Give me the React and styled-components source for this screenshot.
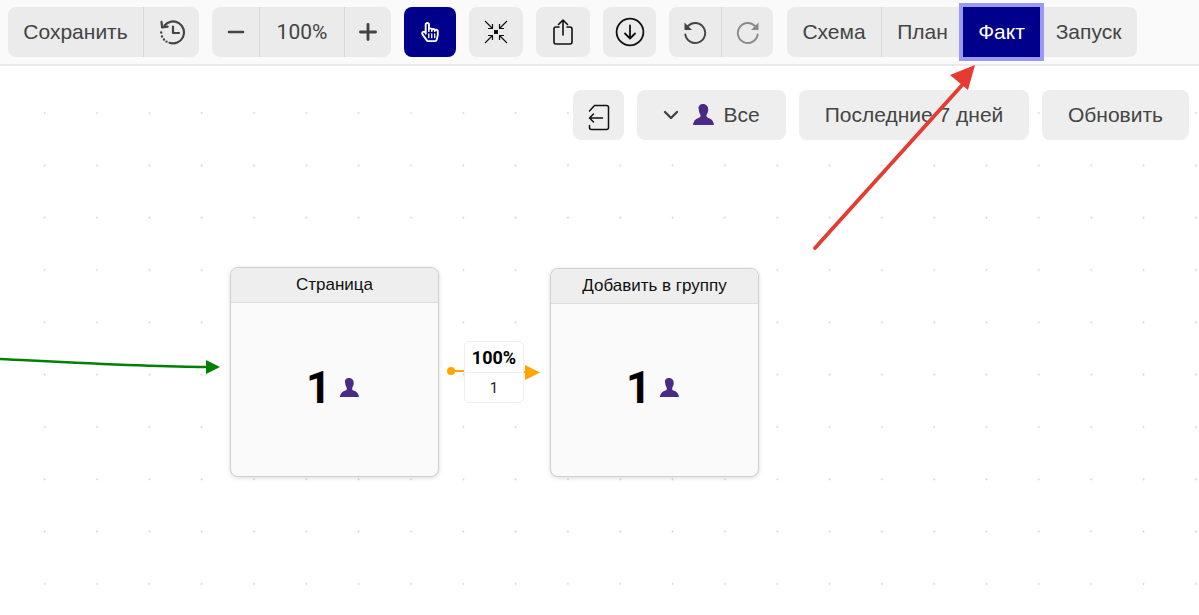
import React from 'react'
import styled, { createGlobalStyle } from 'styled-components'
import { Minus, Plus, ChevronDown } from 'lucide-react'
import { FaRegHandPointer } from 'react-icons/fa'

const GlobalStyle = createGlobalStyle`
  html, body {
    margin: 0;
    height: 100%;
    overflow: hidden;
    background: #fff;
    font-family: "Liberation Sans", Arial, sans-serif;
  }
  * { box-sizing: border-box; }
`

const Page = styled.div`
  width: 1199px;
  height: 615px;
  display: flex;
  flex-direction: column;
  position: relative;
  overflow: hidden;
`

const Toolbar = styled.div`
  height: 66px;
  flex: none;
  display: flex;
  gap: 13px;
  padding: 7px 8px 0;
  background: #fafafa;
  border-bottom: 2px solid #eaeaea;
`

const Group = styled.div`
  height: 50px;
  display: flex;
  border-radius: 8px;
  background: #ebebeb;
  margin-left: ${p => p.$ml || 0}px;
`

const Segment = styled.div`
  width: ${p => p.$w}px;
  height: 50px;
  display: flex;
  align-items: center;
  justify-content: center;
  padding-bottom: 1px;
  font-size: 21px;
  color: #444;
  position: relative;
  border-left: ${p => (p.$line ? '1px solid #d9d9d9' : 'none')};
  ${p => p.$active && `
    background: #00008b;
    color: #fff;
    outline: 4px solid #9a9aef;
    z-index: 1;
  `}
`

const Digits = styled.span`
  font-family: Roboto, "Liberation Sans", sans-serif;
`

const IconButton = styled.div`
  width: ${p => p.$w}px;
  height: 50px;
  display: flex;
  align-items: center;
  justify-content: center;
  border-radius: 8px;
  color: ${p => (p.$active ? '#fff' : '#111')};
  background: ${p => (p.$active ? '#00008b' : '#ebebeb')};
`

const Canvas = styled.div`
  flex: 1;
  position: relative;
  background-image: radial-gradient(circle, #cbcbcb 0.8px, transparent 1.1px);
  background-size: 52.33px 52.33px;
  background-position: 18.5px 20.8px;
`

const ActionRow = styled.div`
  display: flex;
  justify-content: flex-end;
  gap: 13px;
  padding: 24px 10px 0 0;
`

const ActionButton = styled.div`
  width: ${p => p.$w}px;
  height: 50px;
  display: flex;
  align-items: center;
  justify-content: center;
  gap: 9px;
  padding-right: ${p => p.$pr || 0}px;
  padding-top: ${p => p.$pt || 0}px;
  border-radius: 8px;
  background: #eee;
  font-size: 21px;
  color: #444;
`

const Node = styled.div`
  position: absolute;
  left: ${p => p.$x}px;
  top: ${p => p.$y}px;
  width: 209px;
  height: 209.5px;
  display: flex;
  flex-direction: column;
  background: #fafafa;
  border: 1px solid #d0d0d0;
  border-radius: 8px;
  box-shadow: 0 1px 4px rgba(0, 0, 0, 0.15);
  overflow: hidden;
`

const NodeTitle = styled.div`
  height: 35px;
  flex: none;
  display: flex;
  align-items: center;
  justify-content: center;
  background: #eee;
  border-bottom: 1px solid #ddd;
  font-size: 17px;
  color: #111;
`

const NodeBody = styled.div`
  flex: 1;
  display: flex;
  align-items: center;
  justify-content: center;
  gap: 8px;
  padding: 0 4px 3px 0;
  font-family: Roboto, "Liberation Sans", sans-serif;
  font-size: 44px;
  font-weight: 700;
  color: #000;
`

const EdgeLabel = styled.div`
  position: absolute;
  left: 464px;
  top: 275px;
  width: 60px;
  height: 62px;
  display: flex;
  flex-direction: column;
  background: #fff;
  border: 1px solid #eee;
  border-radius: 5px;
  font-family: Roboto, "Liberation Sans", sans-serif;
`

const EdgePercent = styled.div`
  height: 31px;
  display: flex;
  align-items: center;
  justify-content: center;
  border-bottom: 1px solid #eee;
  font-size: 18px;
  font-weight: 700;
  color: #000;
`

const EdgeCount = styled.div`
  flex: 1;
  display: flex;
  align-items: center;
  justify-content: center;
  font-size: 15px;
  color: #222;
`

const Overlay = styled.svg`
  position: absolute;
  left: 0;
  top: 0;
  pointer-events: none;
  z-index: ${p => p.$z || 0};
`

const TurnSvg = styled.svg`
  transform: ${p => (p.$flip ? 'scaleX(-1)' : 'none')};
`

const HistoryIcon = () => (
  <svg width="28" height="28" viewBox="0 0 28 28" fill="none" stroke="#444" strokeWidth="2.2" strokeLinecap="round" strokeLinejoin="round">
    <path d="M6.5 7.5A11 11 0 1 1 11.5 24.8" />
    <path d="M15 8.5V15h6" />
    <path d="M3.5 3.8l.6 5.6 5.6-.7" />
    <path d="M3.2 14.5v.01M4 18.5v.01M6 21.5v.01M8.5 23.6v.01" strokeWidth="2.4" />
  </svg>
)

const CompressIcon = () => (
  <svg width="24" height="24" viewBox="0 0 24 24" fill="none" stroke="#111" strokeWidth="1.2">
    <rect x="10" y="10" width="4" height="4" fill="#111" stroke="none" />
    <path d="M1 1l7.5 7.5M8.5 4v4.5H4" />
    <path d="M23 1l-7.5 7.5M15.5 4v4.5H20" />
    <path d="M1 23l7.5-7.5M8.5 20v-4.5H4" />
    <path d="M23 23l-7.5-7.5M15.5 20v-4.5H20" />
  </svg>
)

const ShareIcon = () => (
  <svg width="20" height="26" viewBox="0 0 20 26" fill="none" stroke="#111" strokeWidth="1.6" strokeLinecap="round" strokeLinejoin="round">
    <path d="M6 8H3a2 2 0 0 0-2 2v13a2 2 0 0 0 2 2h14a2 2 0 0 0 2-2V10a2 2 0 0 0-2-2h-3" />
    <path d="M10 16V1.5M5.5 5.5L10 1l4.5 4.5" />
  </svg>
)

const DownloadIcon = () => (
  <svg width="30" height="30" viewBox="0 0 30 30" fill="none" stroke="#111" strokeWidth="1.8" strokeLinecap="round" strokeLinejoin="round">
    <circle cx="15" cy="15" r="13.4" />
    <path d="M15 8.5v13M10 16.5l5 5 5-5" />
  </svg>
)

const TurnIcon = ({ color, flip }) => (
  <TurnSvg width="24" height="24" viewBox="0 0 24 24" $flip={flip}>
    <path d="M5 6A10 10 0 1 1 2.3 14.5" fill="none" stroke={color} strokeWidth="1.9" strokeLinecap="round" />
    <path d="M1.5 2.5L1.5 10L9 10Z" fill={color} />
  </TurnSvg>
)

const FileBackIcon = () => (
  <svg width="22" height="27" viewBox="0 0 22 27" fill="none" stroke="#111" strokeWidth="1.5" strokeLinecap="round" strokeLinejoin="round">
    <path d="M1.5 7L6.5 1.5h12a2 2 0 0 1 2 2v20a2 2 0 0 1-2 2H3.5a2 2 0 0 1-2-2v-2" />
    <path d="M14.5 14H1.5M5.5 10L1.5 14l4 4" />
  </svg>
)

const PersonIcon = ({ size }) => (
  <svg width={size} height={size} viewBox="0 0 22 22" fill="#4b2a85">
    <path d="M11 0c3.4 0 5.2 2.5 5.2 5.6 0 1.3-.2 2.3-.7 3.3-.5 1.1-1.100 1.900-1.100 2.800 0 1.300 1.100 1.900 2.700 2.500 2.500 1 4.200 2.300 4.900 6.800H1c.7-4.500 2.400-5.800 4.900-6.800 1.600-.6 2.700-1.200 2.700-2.500 0-.9-.6-1.700-1.100-2.800-.5-1-.7-2-.7-3.300C5.800 2.500 7.600 0 11 0z" />
  </svg>
)

export default function App() {
  return (
    <Page>
      <GlobalStyle />
      <Toolbar>
        <Group>
          <Segment $w={135}>Сохранить</Segment>
          <Segment $w={56} $line><HistoryIcon /></Segment>
        </Group>
        <Group>
          <Segment $w={47}><Minus size={24} strokeWidth={2.6} /></Segment>
          <Segment $w={85} $line><Digits>100%</Digits></Segment>
          <Segment $w={47} $line><Plus size={26} strokeWidth={2.6} /></Segment>
        </Group>
        <IconButton $w={52} $active><FaRegHandPointer size={20} /></IconButton>
        <IconButton $w={54}><CompressIcon /></IconButton>
        <IconButton $w={54}><ShareIcon /></IconButton>
        <IconButton $w={53}><DownloadIcon /></IconButton>
        <Group>
          <Segment $w={52}><TurnIcon color="#444" /></Segment>
          <Segment $w={52} $line><TurnIcon color="#8a8a8a" flip /></Segment>
        </Group>
        <Group $ml={1}>
          <Segment $w={94}>Схема</Segment>
          <Segment $w={82} $line>План</Segment>
          <Segment $w={77} $active>Факт</Segment>
          <Segment $w={97}>Запуск</Segment>
        </Group>
      </Toolbar>

      <Canvas>
        <ActionRow>
          <ActionButton $w={51} $pt={5}><FileBackIcon /></ActionButton>
          <ActionButton $w={149} $pr={4}>
            <ChevronDown size={24} strokeWidth={2.4} />
            <PersonIcon size={22} />
            Все
          </ActionButton>
          <ActionButton $w={230}>Последние 7 дней</ActionButton>
          <ActionButton $w={147}>Обновить</ActionButton>
        </ActionRow>

        <Overlay width="1199" height="549">
          <path d="M0 293C80 297 150 301 207 301" fill="none" stroke="#008000" strokeWidth="2.5" />
          <path d="M206 294L220 301L206 308Z" fill="#008000" />
          <circle cx="451" cy="305" r="4" fill="#ffa500" />
          <path d="M451 305H466M522 306H527" stroke="#ffa500" strokeWidth="2" fill="none" />
          <path d="M525 299L540 306.5L525 314Z" fill="#ffa500" />
        </Overlay>

        <Node $x={230} $y={201}>
          <NodeTitle>Страница</NodeTitle>
          <NodeBody>1<PersonIcon size={20} /></NodeBody>
        </Node>
        <Node $x={550} $y={201.5}>
          <NodeTitle>Добавить в группу</NodeTitle>
          <NodeBody>1<PersonIcon size={20} /></NodeBody>
        </Node>

        <EdgeLabel>
          <EdgePercent>100%</EdgePercent>
          <EdgeCount>1</EdgeCount>
        </EdgeLabel>
      </Canvas>

      <Overlay width="1199" height="615" $z={5}>
        <path d="M815 248L964 83" stroke="#e53b30" strokeWidth="3.8" strokeLinecap="round" fill="none" />
        <path d="M975 65L950 75L968 90Z" fill="#e53b30" />
      </Overlay>
    </Page>
  )
}
